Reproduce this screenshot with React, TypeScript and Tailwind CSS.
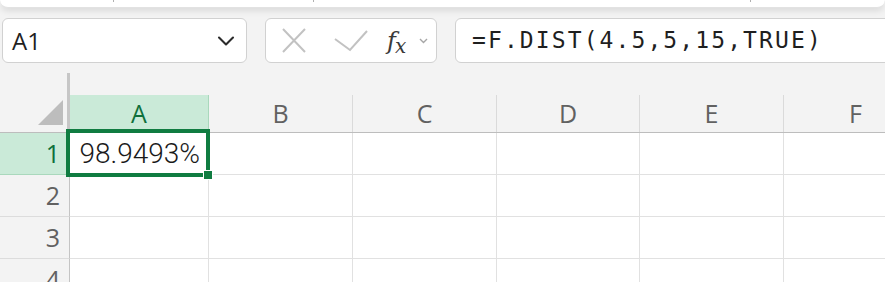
import { ChevronDown } from 'lucide-react'

const COLS = [
  { id: 'A', w: 'w-[139px]' },
  { id: 'B', w: 'w-[144px]' },
  { id: 'C', w: 'w-[144px]' },
  { id: 'D', w: 'w-[143px]' },
  { id: 'E', w: 'w-[144px]' },
  { id: 'F', w: 'w-[144px]' },
]

const ROWS = [1, 2, 3, 4]

function NameBox() {
  return (
    <div className="w-[245px] h-full bg-white border border-[#d1d1d1] rounded-[6px] flex items-center pl-[9px] pr-[6px]">
      <span className="flex-1 text-[24px] text-[#1f1f1f] leading-none">A1</span>
      <ChevronDown size={28} strokeWidth={1.8} className="text-[#2b2b2b]" />
    </div>
  )
}

function FormulaButtons() {
  return (
    <div className="w-[172px] h-full bg-white border border-[#d1d1d1] rounded-[6px] flex items-center pl-[16px]">
      <svg width="24" height="25" viewBox="0 0 24 25" className="shrink-0">
        <path d="M1 1 L23 24 M23 1 L1 24" stroke="#c2c2c2" strokeWidth="2" fill="none" />
      </svg>
      <svg width="34" height="22" viewBox="0 0 34 22" className="ml-[28px] shrink-0">
        <path d="M1 9 L16 20 L33 1" stroke="#c2c2c2" strokeWidth="2" fill="none" />
      </svg>
      <span className="ml-[19px] font-['DejaVu_Serif',serif] italic text-[#3a3a3a] leading-none flex items-end">
        <span className="text-[24px]">f</span>
        <span className="text-[20px] -ml-[1px] translate-y-[3px]">x</span>
      </span>
      <svg width="9" height="6" viewBox="0 0 9 6" className="ml-[13px] shrink-0">
        <path d="M1 1 L4.5 4.5 L8 1" stroke="#a6a6a6" strokeWidth="1.4" fill="none" />
      </svg>
    </div>
  )
}

function FormulaInput() {
  return (
    <div className="flex-1 -mr-[12px] h-full bg-white border border-[#d1d1d1] rounded-[6px] flex items-center pl-[16px]">
      <span className="font-['DejaVu_Sans_Mono',monospace] text-[23px] tracking-[2.1px] text-[#1f1f1f] leading-none">
        =F.DIST(4.5,5,15,TRUE)
      </span>
    </div>
  )
}

function HeaderRow() {
  return (
    <div className="flex h-[60px]">
      <div className="w-[70px] shrink-0 h-full border-r-[3px] border-r-[#c6c6c6] border-b border-b-[#bdbdbd] flex items-end justify-end pr-[4px] pb-[7px]">
        <svg width="25" height="25" viewBox="0 0 25 25">
          <path d="M25 0 L25 25 L0 25 Z" fill="#bdbdbd" />
        </svg>
      </div>
      <div className="flex-1 flex flex-col">
        <div className="h-[22px]" />
        <div className="flex h-[38px] border-b border-[#bdbdbd]">
          {COLS.map((c) => (
            <div
              key={c.id}
              className={`${c.w} shrink-0 h-full flex items-center justify-center text-[25px] leading-none ${
                c.id === 'A'
                  ? 'bg-[#caead8] text-[#0f703b] border-r border-[#a9d8bc]'
                  : 'text-[#616161] border-r border-[#dadada]'
              }`}
            >
              {c.id}
            </div>
          ))}
        </div>
      </div>
    </div>
  )
}

function GridRow({ n }: { n: number }) {
  const active = n === 1
  return (
    <div className="flex h-[42px]">
      <div
        className={`w-[70px] shrink-0 h-full border-r border-r-[#c4c4c4] border-b flex items-center justify-end pr-[9px] text-[25px] leading-none ${
          active ? 'bg-[#caead8] text-[#0f703b] border-b-[#a9d8bc]' : 'text-[#616161] border-b-[#dcdcdc]'
        }`}
      >
        {n}
      </div>
      {COLS.map((c) => (
        <div
          key={c.id}
          className={`${c.w} shrink-0 h-full bg-white border-r border-b border-[#e1e1e1] flex items-center justify-end pr-[8px]`}
        >
          {active && c.id === 'A' && (
            <span className="font-['Roboto',sans-serif] font-light text-[28px] text-[#1a1a1a] leading-none">
              98.9493%
            </span>
          )}
        </div>
      ))}
    </div>
  )
}

export default function App() {
  return (
    <div className="w-[885px] h-[282px] bg-[#f3f3f3] overflow-hidden relative font-['Open_Sans',sans-serif]">
      <div className="h-[8px] bg-white rounded-b-[10px] border-b border-[#e2e2e2] shadow-[0_3px_6px_rgba(0,0,0,0.10)] relative">
        <span className="absolute left-[113px] top-0 w-px h-[2px] bg-[#b0b0b0]" />
        <span className="absolute left-[313px] top-0 w-px h-[2px] bg-[#b0b0b0]" />
        <span className="absolute left-[750px] top-0 w-px h-[2px] bg-[#b0b0b0]" />
      </div>

      <div className="flex gap-[18px] mt-[10px] pl-[2px] h-[45px]">
        <NameBox />
        <FormulaButtons />
        <FormulaInput />
      </div>

      <div className="mt-[10px] relative">
        <HeaderRow />
        {ROWS.map((n) => (
          <GridRow key={n} n={n} />
        ))}
        <div className="absolute left-[66px] top-[56px] w-[144px] h-[48px] border-4 border-[#107c41]" />
        <div className="absolute left-[203px] top-[97px] w-[10px] h-[10px] border border-white bg-[#107c41]" />
      </div>
    </div>
  )
}
